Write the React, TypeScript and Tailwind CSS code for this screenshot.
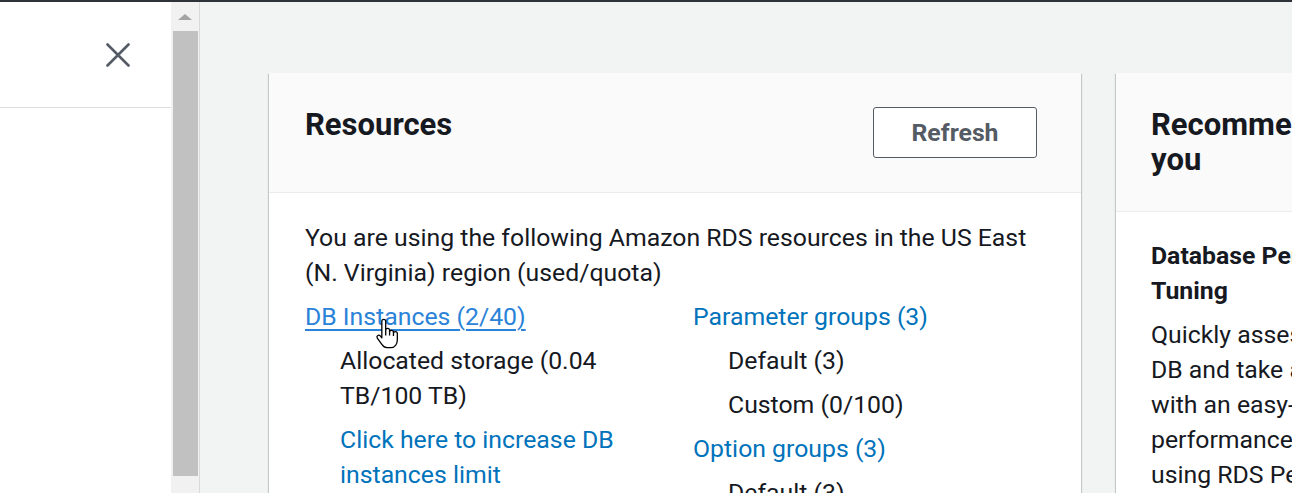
import { ReactNode } from 'react'

const cardShadow =
  'shadow-[0_1px_1px_0_rgba(0,28,36,0.3),1px_1px_1px_0_rgba(0,28,36,0.15),-1px_1px_1px_0_rgba(0,28,36,0.15)]'

function HandCursor() {
  return (
    <svg
      className="absolute left-[69px] top-[19px] h-[31px] w-[26px] pointer-events-none"
      viewBox="0 0 20 24"
      fill="none"
    >
      <path
        d="M6 13V2.5A1.5 1.5 0 0 1 9 2.5V9.5A1.5 1.5 0 0 1 12 9.5V11A1.5 1.5 0 0 1 15 11V12A1.5 1.5 0 0 1 18 12V17C18 20 16 23 13 23H10C8 23 7 22 6 20.5L2.5 15.5A1.4 1.4 0 0 1 4.8 13.9L6 15.3Z"
        fill="white"
        stroke="black"
        strokeWidth="1"
        strokeLinejoin="round"
      />
      <path d="M9 9.5V13.5M12 11V13.5M15 12V14" stroke="black" strokeWidth="1" />
    </svg>
  )
}

function Item({ children, link, indent }: { children: ReactNode; link?: boolean; indent?: boolean }) {
  return (
    <div className={`${indent ? 'pl-[35px]' : ''} ${link ? 'text-[#0073bb]' : 'text-[#16191f]'} mt-[9px]`}>
      {children}
    </div>
  )
}

export default function App() {
  return (
    <div className="h-[493px] w-[1292px] overflow-hidden border-t-2 border-[#2e3339] flex font-['Roboto',sans-serif] text-[24.8px] leading-[35px] text-[#16191f]">
      {/* Side panel */}
      <div className="w-[171px] flex-none bg-white">
        <div className="h-[106px] border-b border-[#dddddd] flex items-center justify-end pr-[41px]">
          <svg width="24" height="24" viewBox="0 0 24 24">
            <path d="M1.5 1.5L22.5 22.5M22.5 1.5L1.5 22.5" stroke="#545b64" strokeWidth="2.6" strokeLinecap="round" />
          </svg>
        </div>
      </div>

      {/* Scrollbar */}
      <div className="w-[29px] flex-none bg-[#f1f1f1] border-r border-[#dadada] flex flex-col items-center">
        <div className="h-[29px] flex items-center justify-center">
          <div className="w-0 h-0 border-l-[7px] border-r-[7px] border-b-[6px] border-l-transparent border-r-transparent border-b-[#a3a3a3]" />
        </div>
        <div className="w-[25px] h-[445px] bg-[#c1c1c1]" />
      </div>

      {/* Main content */}
      <div className="flex-1 bg-[#f2f3f3] pl-[69px] pt-[71px] flex gap-[35px] overflow-hidden">
        {/* Resources card */}
        <div className={`w-[812px] flex-none bg-white ${cardShadow}`}>
          <div className="bg-[#fafafa] border-b border-[#eaeded] pl-[36px] pr-[44px] pt-[34px] pb-[34px] flex items-start justify-between">
            <h2 className="text-[31px] leading-[35px] font-bold text-[#16191f]">Resources</h2>
            <button className="w-[164px] h-[51px] bg-white border border-[#545b64] rounded-[3px] text-[24.8px] font-bold text-[#545b64]">
              Refresh
            </button>
          </div>
          <div className="pl-[36px] pr-[36px] pt-[27px]">
            <p>
              You are using the following Amazon RDS resources in the US East (N. Virginia) region (used/quota)
            </p>
            <div className="grid grid-cols-[388px_1fr]">
              <div className="pr-[40px]">
                <Item>
                  <span className="relative inline-block">
                    <a className="text-[#2a83d8] underline underline-offset-[4px] decoration-[1.5px]">DB Instances (2/40)</a>
                    <HandCursor />
                  </span>
                </Item>
                <Item indent>Allocated storage (0.04 TB/100 TB)</Item>
                <Item indent link>
                  Click here to increase DB instances limit
                </Item>
              </div>
              <div>
                <Item link>Parameter groups (3)</Item>
                <Item indent>Default (3)</Item>
                <Item indent>Custom (0/100)</Item>
                <Item link>Option groups (3)</Item>
                <Item indent>Default (3)</Item>
              </div>
            </div>
          </div>
        </div>

        {/* Recommended card */}
        <div className={`w-[420px] flex-none bg-white ${cardShadow}`}>
          <div className="bg-[#fafafa] border-b border-[#eaeded] pl-[35px] pt-[34px] pb-[34px]">
            <h2 className="text-[31px] leading-[35px] font-bold whitespace-nowrap">
              Recommended for
              <br />
              you
            </h2>
          </div>
          <div className="pl-[35px] pt-[26px] whitespace-nowrap">
            <h3 className="font-bold mb-[9px]">
              Database Performance
              <br />
              Tuning
            </h3>
            <p>
              Quickly assess the performance of your
              <br />
              DB and take action
              <br />
              with an easy-to-understand
              <br />
              performance dashboard
              <br />
              using RDS Performance Insights
            </p>
          </div>
        </div>
      </div>
    </div>
  )
}
